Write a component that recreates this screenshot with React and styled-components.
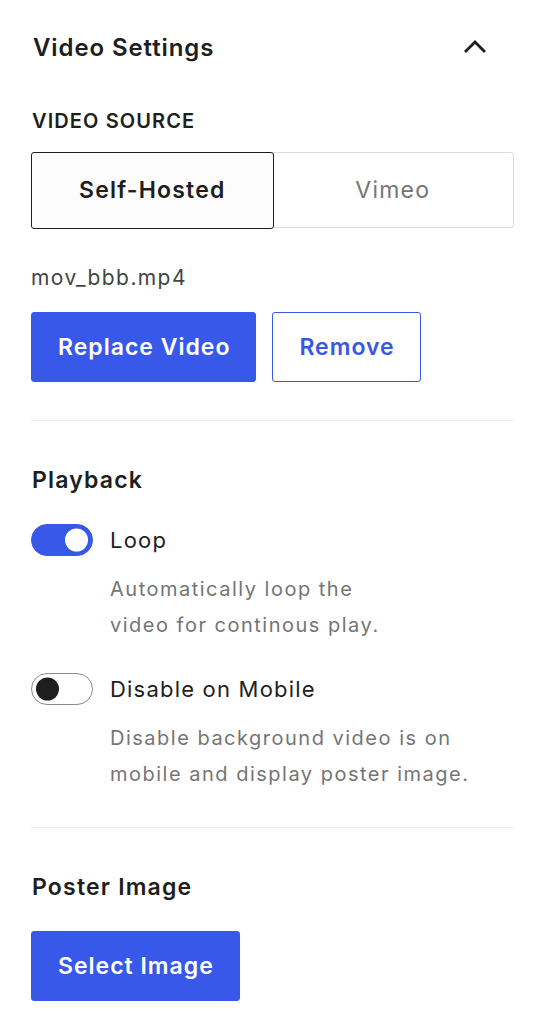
import styled, { createGlobalStyle } from 'styled-components';
import { useState } from 'react';

const GlobalStyle = createGlobalStyle`
    * { box-sizing: border-box; }
    body {
        margin: 0;
        background: #ffffff;
        font-family: Inter, "Noto Sans", "Liberation Sans", sans-serif;
        color: #1e1e1e;
        -webkit-font-smoothing: antialiased;
    }
`;

export default function App () {
    const [source, setSource] = useState('self');
    const [loop, setLoop] = useState(true);
    const [disableMobile, setDisableMobile] = useState(false);

    return (
        <>
            <GlobalStyle />
            <Panel>
                <Header>
                    <Title>Video Settings</Title>
                    <svg width="24" height="24" viewBox="0 0 24 24" fill="none">
                        <path d="M3 16L12 7l9 9" stroke="#1e1e1e" strokeWidth="2.8" strokeLinecap="square" />
                    </svg>
                </Header>

                <Section>
                    <Label>Video Source</Label>
                    <Segmented>
                        <Segment active={source === 'self'} onClick={() => setSource('self')}>Self-Hosted</Segment>
                        <Segment active={source === 'vimeo'} onClick={() => setSource('vimeo')}>Vimeo</Segment>
                    </Segmented>
                    <FileName>mov_bbb.mp4</FileName>
                    <ButtonRow>
                        <Button>Replace Video</Button>
                        <Button secondary>Remove</Button>
                    </ButtonRow>
                </Section>

                <Divider space={38} />

                <Section>
                    <Heading>Playback</Heading>
                    <ToggleRow>
                        <Switch on={loop} onClick={() => setLoop(!loop)}><Thumb on={loop} /></Switch>
                        <ToggleLabel>Loop</ToggleLabel>
                    </ToggleRow>
                    <Help>Automatically loop the<br />video for continous play.</Help>
                    <ToggleRow>
                        <Switch on={disableMobile} onClick={() => setDisableMobile(!disableMobile)}><Thumb on={disableMobile} /></Switch>
                        <ToggleLabel>Disable on Mobile</ToggleLabel>
                    </ToggleRow>
                    <Help>Disable background video is on<br />mobile and display poster image.</Help>
                </Section>

                <Divider space={35} />

                <Section>
                    <Heading>Poster Image</Heading>
                    <Spacer />
                    <Button>Select Image</Button>
                </Section>
            </Panel>
        </>
    );
}

const Panel = styled.div`
    width: 538px;
    padding: 0 24px 0 31px;
`;

const Header = styled.div`
    display: flex;
    justify-content: space-between;
    align-items: center;
    height: 94px;
    padding: 0 27px 0 2px;
`;

const Title = styled.h2`
    margin: 0;
    font-size: 24px;
    font-weight: 600;
    letter-spacing: 0.9px;
`;

const Section = styled.div`
    display: flex;
    flex-direction: column;
    align-items: flex-start;
`;

const Label = styled.div`
    text-transform: uppercase;
    font-size: 20px;
    font-weight: 600;
    line-height: 26px;
    letter-spacing: 1.1px;
    margin: 14px 0 18px 1px;
`;

const Segmented = styled.div`
    display: grid;
    grid-template-columns: 1fr 1fr;
    width: 100%;
    height: 76px;
    border: 1.5px solid #dcdcdc;
    border-radius: 3px;
`;

const Segment = styled.button`
    font-family: inherit;
    font-size: 23px;
    letter-spacing: 1.2px;
    font-weight: ${({ active }) => active ? 600 : 400};
    color: ${({ active }) => active ? '#1e1e1e' : '#757575'};
    background: ${({ active }) => active ? '#fcfcfc' : 'transparent'};
    border: ${({ active }) => active ? '1.5px solid #1e1e1e' : 'none'};
    border-radius: 3px;
    margin: -1.5px;
    cursor: pointer;
`;

const FileName = styled.div`
    font-size: 21px;
    letter-spacing: 1.4px;
    color: #444444;
    line-height: 26px;
    margin: 37px 0 21px 0;
`;

const ButtonRow = styled.div`
    display: flex;
    gap: 16px;
`;

const Button = styled.button`
    height: 70px;
    padding: 0 25px 0 26px;
    font-family: inherit;
    font-size: 23px;
    font-weight: 600;
    letter-spacing: 1px;
    border-radius: 3px;
    cursor: pointer;
    color: ${({ secondary }) => secondary ? '#3858e9' : '#ffffff'};
    background: ${({ secondary }) => secondary ? '#ffffff' : '#3858e9'};
    border: 1.5px solid #3858e9;
`;

const Divider = styled.hr`
    width: 100%;
    border: none;
    border-top: 1.5px solid #ececec;
    margin: ${({ space }) => space}px 0 0;
`;

const Heading = styled.h3`
    margin: 45px 0 0 1px;
    font-size: 23px;
    font-weight: 600;
    letter-spacing: 1.2px;
    line-height: 28px;
`;

const Spacer = styled.div`
    height: 30px;
`;

const ToggleRow = styled.div`
    display: flex;
    align-items: center;
    gap: 17px;
    margin-top: 30px;
`;

const Switch = styled.button`
    position: relative;
    width: 62px;
    height: 32px;
    padding: 0;
    border-radius: 16px;
    cursor: pointer;
    background: ${({ on }) => on ? '#3858e9' : '#ffffff'};
    border: 1.5px solid ${({ on }) => on ? '#3858e9' : '#8a8a8a'};
`;

const Thumb = styled.span`
    position: absolute;
    top: 50%;
    left: ${({ on }) => on ? '33px' : '4px'};
    width: 23px;
    height: 23px;
    border-radius: 50%;
    transform: translateY(-50%);
    background: ${({ on }) => on ? '#ffffff' : '#1e1e1e'};
`;

const ToggleLabel = styled.span`
    font-size: 22px;
    letter-spacing: 1.2px;
    line-height: 28px;
`;

const Help = styled.p`
    margin: 15px 0 0 79px;
    font-size: 20px;
    letter-spacing: 1.5px;
    line-height: 36px;
    color: #757575;
`;
